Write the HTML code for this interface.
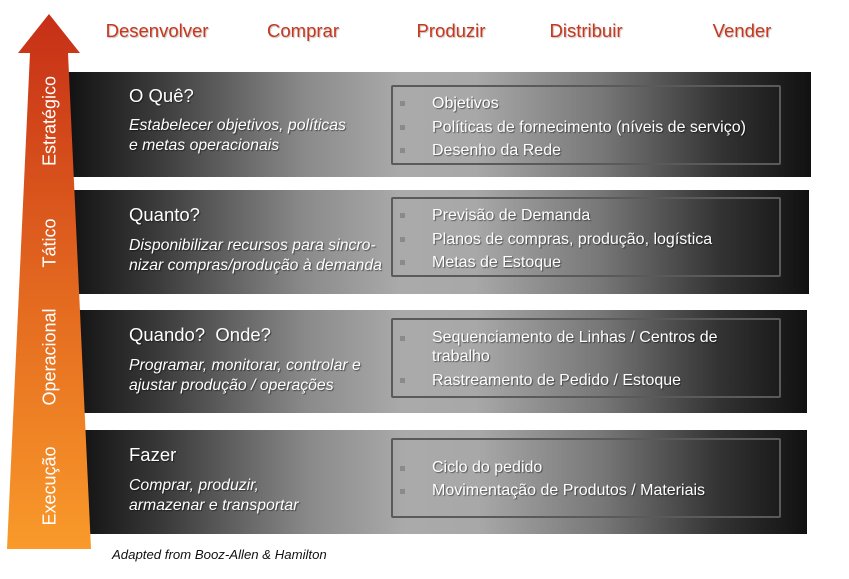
<!DOCTYPE html>
<html><head><meta charset="utf-8"><style>
body{margin:0;width:849px;height:579px;background:#fff;position:relative;overflow:hidden;font-family:"Liberation Sans",sans-serif}
.h{position:absolute;top:20px;font-size:18.5px;color:#c9361c;text-shadow:1px 1px 1px rgba(0,0,0,.25);transform:translateX(-50%);white-space:nowrap}
.band{position:absolute;background:linear-gradient(90deg,#111 0%,#3a3a3a 12%,#8a8a8a 32%,#aaa 45%,#a8a8a8 55%,#777 72%,#333 88%,#111 100%)}
.t{position:absolute;left:129px;color:#fff;font-size:18.5px;text-shadow:1px 1px 1px rgba(0,0,0,.5)}
.s{position:absolute;left:129px;color:#fff;font-size:15.8px;font-style:italic;line-height:20px;text-shadow:1px 1px 1px rgba(0,0,0,.5);white-space:nowrap}
.box{position:absolute;left:391px;width:390px;border:2px solid #5a5a5a;border-radius:2px;box-sizing:border-box}
.li{position:absolute;left:432px;color:#fff;font-size:16px;text-shadow:1px 1px 1px rgba(0,0,0,.5);white-space:nowrap;line-height:19px}
.b{position:absolute;left:400px;width:5px;height:5px;background:#8a8a8a}
.v{position:absolute;color:#fff;font-size:18px;transform:translate(-50%,-50%) rotate(-90deg);white-space:nowrap}
</style></head><body>
<div class="h" style="left:157px">Desenvolver</div>
<div class="h" style="left:303px">Comprar</div>
<div class="h" style="left:451px">Produzir</div>
<div class="h" style="left:586px">Distribuir</div>
<div class="h" style="left:742px">Vender</div>

<div class="band" style="left:66px;top:72px;width:745px;height:105px"></div>
<div class="band" style="left:66px;top:190px;width:743px;height:104px"></div>
<div class="band" style="left:70px;top:310px;width:737px;height:103px"></div>
<div class="band" style="left:76px;top:430px;width:731px;height:104px"></div>

<svg style="position:absolute;left:0;top:0" width="100" height="560">
<defs><linearGradient id="g" x1="0" y1="0" x2="0" y2="1"><stop offset="0" stop-color="#c62f17"/><stop offset="0.5" stop-color="#e2661f"/><stop offset="1" stop-color="#f99a2a"/></linearGradient></defs>
<polygon points="49,14 80,53 68,53 91,549 7,549 30,53 18,53" fill="url(#g)"/>
</svg>
<div class="v" style="left:50px;top:121px">Estratégico</div>
<div class="v" style="left:50px;top:243px">Tático</div>
<div class="v" style="left:50px;top:357px">Operacional</div>
<div class="v" style="left:50px;top:486px">Execução</div>

<div class="t" style="top:85px">O Quê?</div>
<div class="s" style="top:116px">Estabelecer objetivos, políticas<br>e metas operacionais</div>
<div class="box" style="top:85px;height:80px"></div>
<div class="b" style="top:101px"></div><div class="li" style="top:94px">Objetivos</div>
<div class="b" style="top:125px"></div><div class="li" style="top:118px">Políticas de fornecimento (níveis de serviço)</div>
<div class="b" style="top:148px"></div><div class="li" style="top:141px">Desenho da Rede</div>

<div class="t" style="top:204px">Quanto?</div>
<div class="s" style="top:236px">Disponibilizar recursos para sincro-<br>nizar compras/produção à demanda</div>
<div class="box" style="top:197px;height:80px"></div>
<div class="b" style="top:213px"></div><div class="li" style="top:206px">Previsão de Demanda</div>
<div class="b" style="top:237px"></div><div class="li" style="top:230px">Planos de compras, produção, logística</div>
<div class="b" style="top:260px"></div><div class="li" style="top:253px">Metas de Estoque</div>

<div class="t" style="top:324px">Quando?&nbsp; Onde?</div>
<div class="s" style="top:356px">Programar, monitorar, controlar e<br>ajustar produção / operações</div>
<div class="box" style="top:318px;height:80px"></div>
<div class="b" style="top:336px"></div><div class="li" style="top:328px">Sequenciamento de Linhas / Centros de<br>trabalho</div>
<div class="b" style="top:378px"></div><div class="li" style="top:371px">Rastreamento de Pedido / Estoque</div>

<div class="t" style="top:444px">Fazer</div>
<div class="s" style="top:476px">Comprar, produzir,<br>armazenar e transportar</div>
<div class="box" style="top:438px;height:80px"></div>
<div class="b" style="top:466px"></div><div class="li" style="top:458px">Ciclo do pedido</div>
<div class="b" style="top:489px"></div><div class="li" style="top:481px">Movimentação de Produtos / Materiais</div>

<div style="position:absolute;left:112px;top:547px;font-size:13.2px;font-style:italic;color:#111">Adapted from Booz-Allen &amp; Hamilton</div>
</body></html>
